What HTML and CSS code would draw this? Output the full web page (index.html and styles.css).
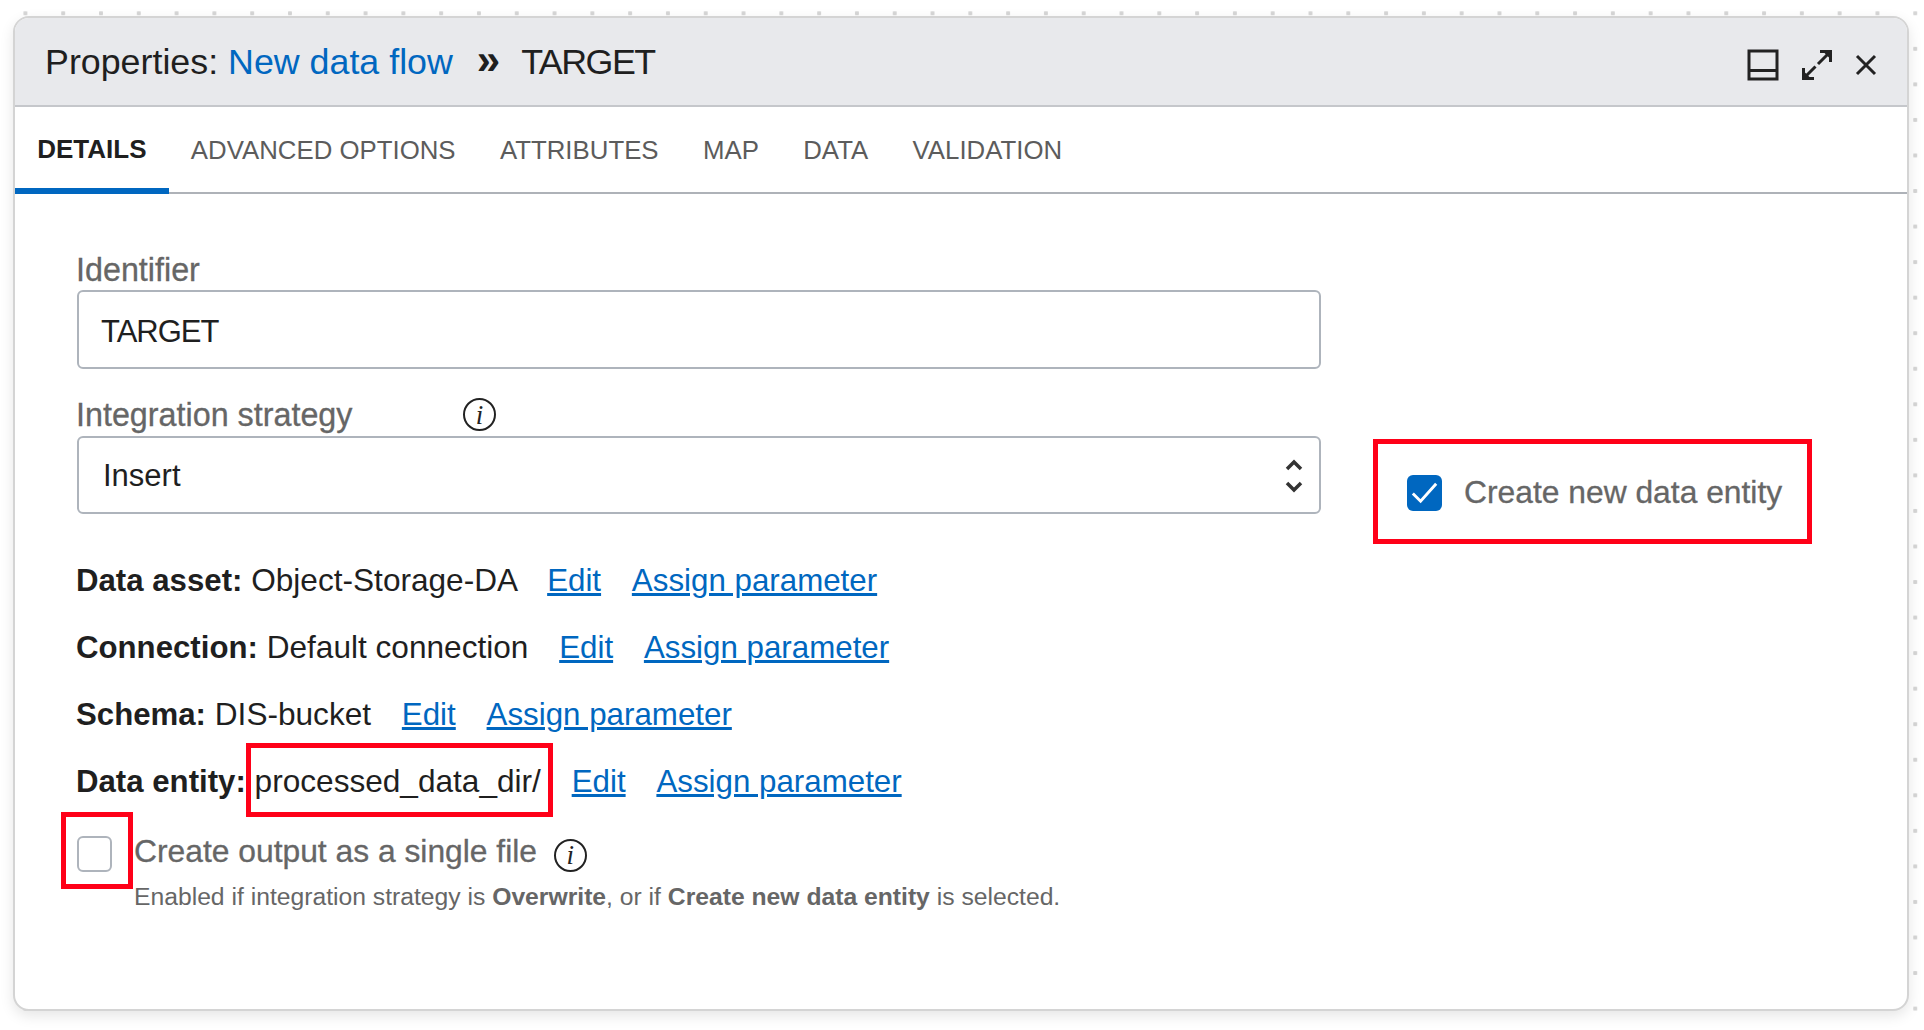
FILE: index.html

```html
<!DOCTYPE html>
<html lang="en">
<head>
    <meta charset="UTF-8">
    <meta name="viewport" content="width=device-width, initial-scale=1.0">
    <title>Properties: New data flow</title>
    <link rel="stylesheet" href="styles.css">
</head>
<body>
    <div class="panel">
        <!-- Title bar -->
        <header class="panel-header">
            <h1 class="panel-title">
                Properties: <a href="#" class="title-link">New data flow</a>
                <span class="title-sep">&raquo;</span>
                <span class="title-name">TARGET</span>
            </h1>
            <div class="panel-actions">
                <svg class="action-icon" viewBox="0 0 32 32" fill="none" stroke="#222" stroke-width="3">
                    <rect x="2" y="2" width="28" height="28"/>
                    <path d="M2 21.5H30"/>
                </svg>
                <svg class="action-icon" viewBox="0 0 32 32" fill="none" stroke="#222" stroke-width="3">
                    <path d="M19 2.5H29.5V13M29.5 2.5L17 15M2.5 19V29.5H13M2.5 29.5L14.5 17.5"/>
                    <path d="M22 2.5H29.5V10ZM2.5 22V29.5H10Z" fill="#222" stroke="none"/>
                </svg>
                <svg class="action-icon close-icon" viewBox="0 0 22 22" fill="none" stroke="#222" stroke-width="3">
                    <path d="M2 2L20 20M20 2L2 20"/>
                </svg>
            </div>
        </header>

        <!-- Tabs -->
        <nav class="tabs">
            <a href="#" class="tab active">DETAILS</a>
            <a href="#" class="tab">ADVANCED OPTIONS</a>
            <a href="#" class="tab">ATTRIBUTES</a>
            <a href="#" class="tab">MAP</a>
            <a href="#" class="tab">DATA</a>
            <a href="#" class="tab">VALIDATION</a>
        </nav>

        <!-- Details form -->
        <main class="details">
            <label class="field-label">Identifier</label>
            <div class="text-box identifier-box"><span class="box-name">TARGET</span></div>

            <label class="field-label strategy-label">
                Integration strategy
                <span class="info-icon strategy-info">i</span>
            </label>
            <div class="strategy-row">
                <div class="text-box select-box">
                    Insert
                    <svg class="spinner" viewBox="0 0 18 34" fill="none" stroke="#333" stroke-width="3.5">
                        <path d="M2 10L9 3L16 10M2 24L9 31L16 24"/>
                    </svg>
                </div>
                <div class="new-entity">
                    <span class="check on">
                        <svg viewBox="0 0 36 36" fill="none" stroke="#fff" stroke-width="3">
                            <path d="M6 19L14 27L30 9"/>
                        </svg>
                    </span>
                    Create new data entity
                </div>
            </div>

            <p class="info-row info-first"><b>Data asset:</b> Object-Storage-DA <a href="#">Edit</a> <a href="#">Assign parameter</a></p>
            <p class="info-row"><b>Connection:</b> Default connection <a href="#">Edit</a> <a href="#">Assign parameter</a></p>
            <p class="info-row"><b>Schema:</b> DIS-bucket <a href="#">Edit</a> <a href="#">Assign parameter</a></p>
            <p class="info-row"><b>Data entity:</b> processed_data_dir/ <a href="#">Edit</a> <a href="#">Assign parameter</a></p>

            <div class="single-file">
                <span class="check"></span>
                <div>
                    <div class="single-file-label">Create output as a single file <span class="info-icon">i</span></div>
                    <div class="help-text">Enabled if integration strategy is <b>Overwrite</b>, or if <b>Create new data entity</b> is selected.</div>
                </div>
            </div>
        </main>

        <!-- Red annotations drawn over the screenshot -->
        <div class="mark mark-entity"></div>
        <div class="mark mark-name"></div>
        <div class="mark mark-check"></div>
    </div>
</body>
</html>
```

FILE: styles.css

```css
/* General Styles */
html, body {
    height: 100%;
}

body {
    margin: 0;
    padding: 16px 15px 19px 13px;
    box-sizing: border-box;
    font-family: "Liberation Sans", Arial, sans-serif;
    color: #1f1f1f;
    background-color: #fff;
    background-image: radial-gradient(circle, #d6d6d6 2px, transparent 2.5px);
    background-size: 37.8px 35.56px;
    background-position: 6.5px -4.5px;
    overflow: hidden;
}

.panel {
    position: relative;
    height: 100%;
    box-sizing: border-box;
    border: 2px solid #d4d4d4;
    border-radius: 16px;
    background: #fff;
    box-shadow: 0 5px 14px rgba(0, 0, 0, 0.1);
    overflow: hidden;
}

/* Title bar */
.panel-header {
    display: flex;
    align-items: center;
    justify-content: space-between;
    height: 87px;
    padding: 0 30px 0 30px;
    background: #e8e9ec;
    border-bottom: 2px solid #c5c7cb;
}

.panel-title {
    margin: 0 0 4px;
    font-size: 35.8px;
    font-weight: normal;
    white-space: nowrap;
}

.title-link {
    color: #0067c0;
    text-decoration: none;
}

.title-sep {
    margin: 0 11px 0 14px;
    font-size: 42px;
    font-weight: bold;
}

.title-name {
    letter-spacing: -1.5px;
}

.panel-actions {
    display: flex;
    align-items: center;
    gap: 22px;
    margin-top: 6px;
}

.action-icon {
    display: block;
    width: 32px;
    height: 32px;
}

.close-icon {
    width: 22px;
    height: 22px;
}

/* Tabs */
.tabs {
    display: flex;
    height: 87px;
    border-bottom: 2px solid #aeb2b8;
    box-sizing: border-box;
}

.tab {
    display: flex;
    align-items: center;
    padding: 0 22.2px;
    margin-bottom: -2px;
    font-size: 25.8px;
    color: #5c5c5c;
    text-decoration: none;
}

.tab.active {
    font-size: 26px;
    font-weight: bold;
    color: #1f1f1f;
    border-bottom: 6px solid #0067c0;
    padding-top: 4px;
}

/* Details form */
.details {
    padding: 59px 0 0 61px;
}

.field-label {
    display: block;
    font-size: 32.3px;
    line-height: 34px;
    color: #666;
    -webkit-text-stroke: 0.3px #666;
}

.strategy-label {
    position: relative;
    margin-top: 29px;
}

.text-box {
    box-sizing: border-box;
    display: flex;
    align-items: center;
    justify-content: space-between;
    width: 1244px;
    height: 78px;
    margin: 3px 0 0 1px;
    padding: 2px 22px 0;
    border: 2px solid #aeb4bc;
    border-radius: 6px;
    font-size: 31px;
}

.identifier-box {
    height: 79px;
    padding-top: 4px;
}

.box-name {
    letter-spacing: -1px;
}

.select-box {
    margin-top: 4px;
    padding-left: 24px;
}

.spinner {
    width: 18px;
    height: 34px;
    margin-right: -6px;
}

.info-icon {
    display: inline-flex;
    align-items: center;
    justify-content: center;
    box-sizing: border-box;
    width: 33px;
    height: 33px;
    border: 2px solid #222;
    border-radius: 50%;
    font-family: "Liberation Serif", serif;
    font-size: 27px;
    font-style: italic;
    color: #222;
    vertical-align: middle;
    -webkit-text-stroke: 0;
}

.strategy-info {
    position: absolute;
    left: 387px;
    top: 0;
}

.strategy-row {
    display: flex;
    align-items: flex-start;
}

.new-entity {
    display: flex;
    align-items: center;
    gap: 22px;
    margin: 42px 0 0 86px;
    font-size: 31.8px;
    color: #666;
    -webkit-text-stroke: 0.3px #666;
    white-space: nowrap;
}

.check {
    box-sizing: border-box;
    flex: none;
    display: block;
    width: 35px;
    height: 36px;
    border: 2px solid #aeb4bc;
    border-radius: 6px;
}

.check.on {
    border: 0;
    background: #0067c0;
}

.check svg {
    display: block;
}

.info-row {
    margin: 30px 0 0;
    font-size: 31.6px;
    line-height: 36px;
    white-space: nowrap;
}

.info-first {
    margin-top: 48px;
}

.info-row b {
    font-size: 31.2px;
}

.info-row a {
    margin-left: 22px;
    font-size: 31.3px;
    color: #0067c0;
}

.single-file {
    display: flex;
    gap: 22px;
    margin: 31px 0 0 1px;
}

.single-file .check {
    margin-top: 5px;
}

.single-file-label {
    font-size: 31.8px;
    line-height: 40px;
    color: #666;
    -webkit-text-stroke: 0.3px #666;
}

.single-file-label .info-icon {
    margin-left: 8px;
    margin-top: 3px;
}

.help-text {
    margin-top: 11px;
    font-size: 24.7px;
    color: #666;
}

/* Annotations */
.mark {
    position: absolute;
    box-sizing: border-box;
    border: 5px solid #ff0018;
}

.mark-entity {
    left: 1358px;
    top: 421px;
    width: 439px;
    height: 105px;
}

.mark-name {
    left: 231px;
    top: 725px;
    width: 307px;
    height: 74px;
}

.mark-check {
    left: 46px;
    top: 794px;
    width: 72px;
    height: 77px;
}
```
